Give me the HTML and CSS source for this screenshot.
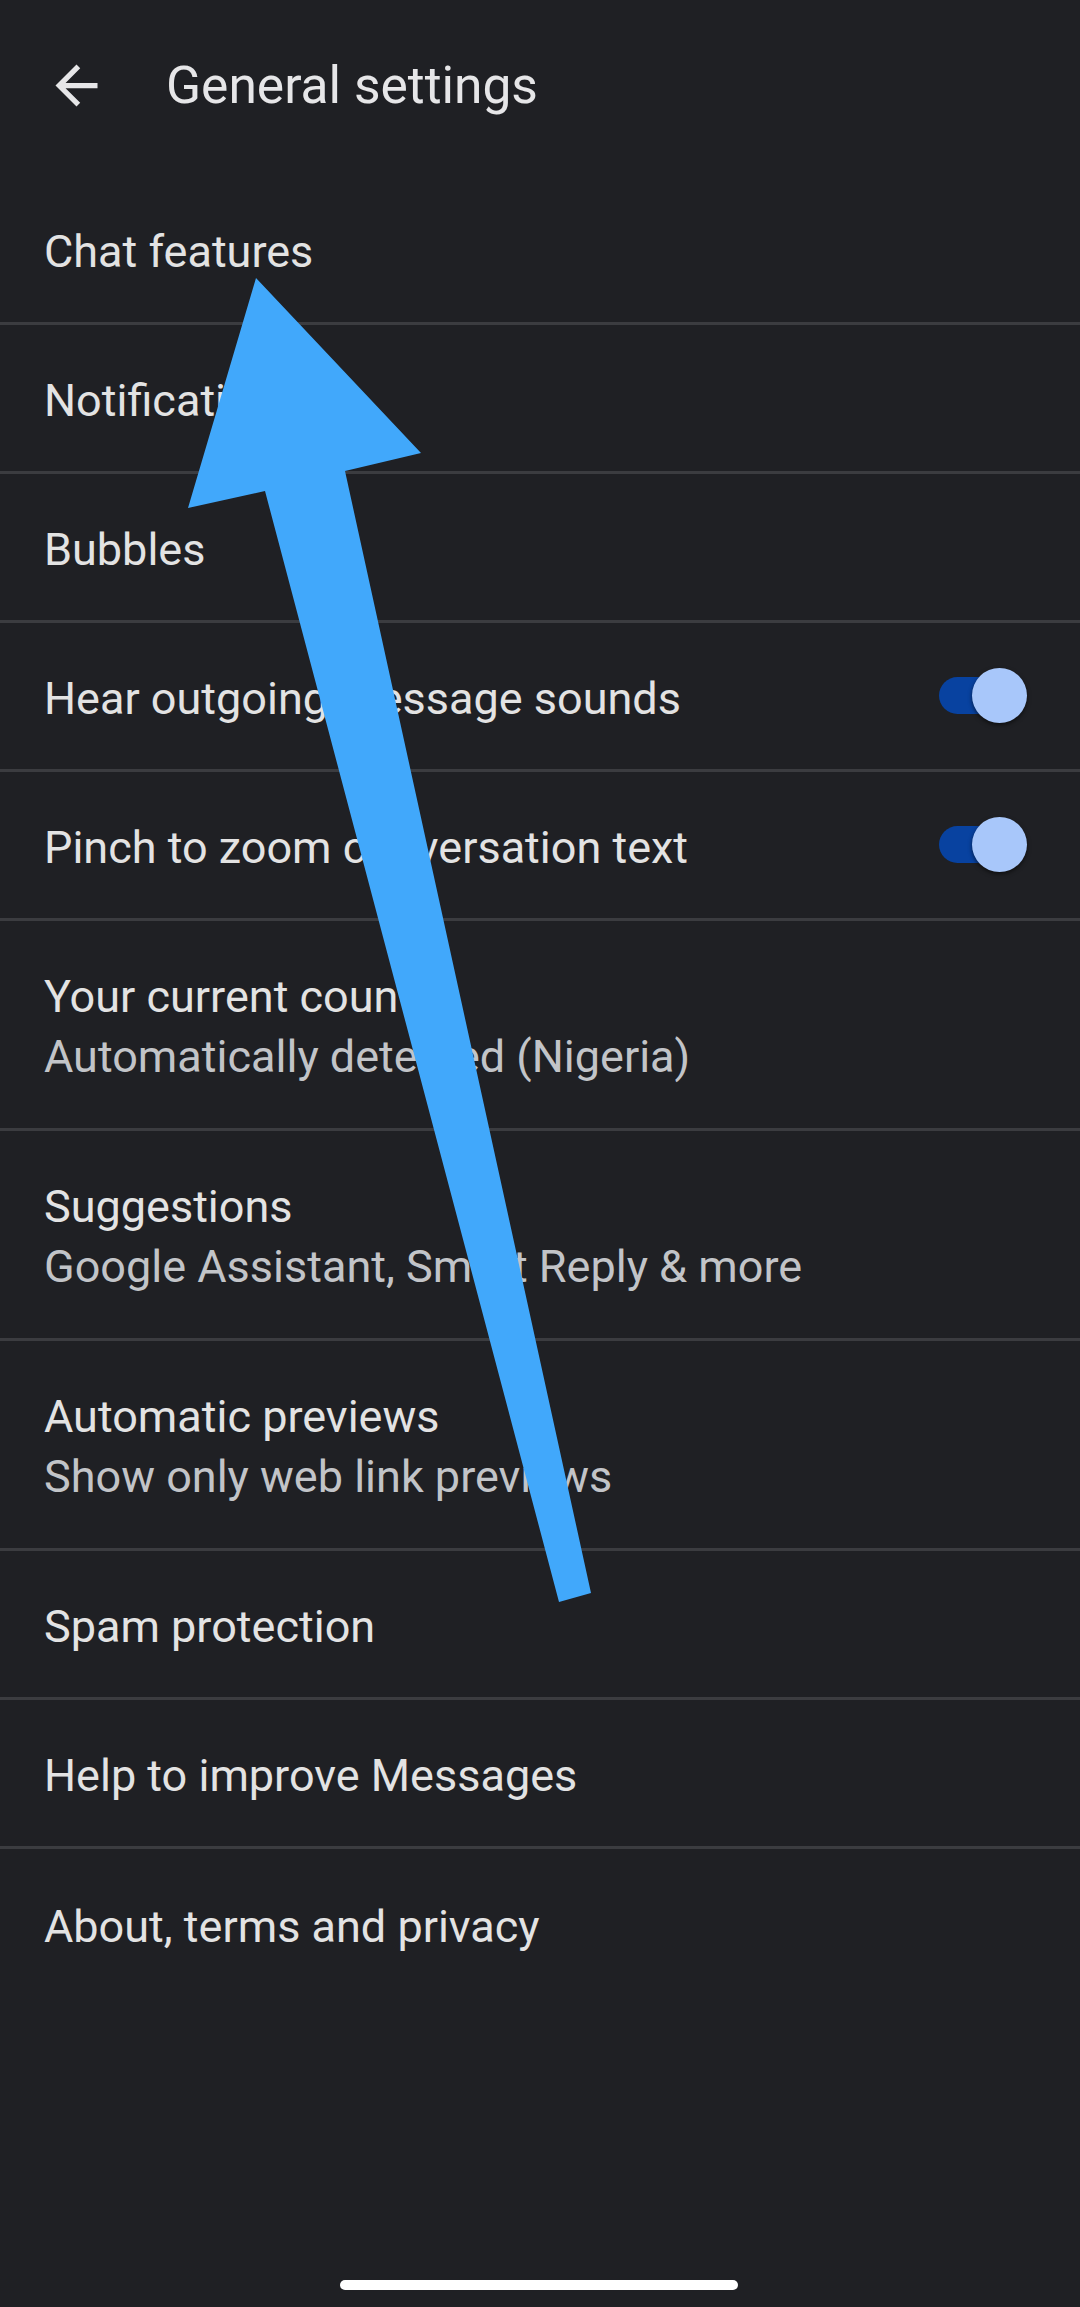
FILE: index.html
```html
<!DOCTYPE html>
<html lang="en">
<head>
<meta charset="utf-8">
<title>General settings</title>
<link rel="stylesheet" href="styles.css">
</head>
<body>
<div class="screen">
  <header class="topbar">
    <svg class="back" viewBox="0 0 24 24" aria-hidden="true">
      <path d="M20 11H7.83l5.59-5.59L12 4l-8 8 8 8 1.41-1.41L7.83 13H20v-2z"/>
    </svg>
    <h1 class="title">General settings</h1>
  </header>

  <ul class="list">
    <li class="row"><div class="texts"><span class="label">Chat features</span></div></li>
    <li class="row"><div class="texts"><span class="label">Notifications</span></div></li>
    <li class="row"><div class="texts"><span class="label">Bubbles</span></div></li>
    <li class="row">
      <div class="texts"><span class="label">Hear outgoing message sounds</span></div>
      <div class="switch"><span class="track"></span><span class="thumb"></span></div>
    </li>
    <li class="row">
      <div class="texts"><span class="label">Pinch to zoom conversation text</span></div>
      <div class="switch"><span class="track"></span><span class="thumb"></span></div>
    </li>
    <li class="row tall">
      <div class="texts">
        <span class="label">Your current country</span>
        <span class="sub">Automatically detected (Nigeria)</span>
      </div>
    </li>
    <li class="row tall">
      <div class="texts">
        <span class="label">Suggestions</span>
        <span class="sub">Google Assistant, Smart Reply &amp; more</span>
      </div>
    </li>
    <li class="row tall">
      <div class="texts">
        <span class="label">Automatic previews</span>
        <span class="sub">Show only web link previews</span>
      </div>
    </li>
    <li class="row"><div class="texts"><span class="label">Spam protection</span></div></li>
    <li class="row"><div class="texts"><span class="label">Help to improve Messages</span></div></li>
    <li class="row last"><div class="texts"><span class="label">About, terms and privacy</span></div></li>
  </ul>

  <svg class="annotation" viewBox="0 0 1080 2307" aria-hidden="true">
    <polygon points="256,278 421,453 345,471 591,1593 559,1602 265,491 188,508"/>
  </svg>

  <div class="homebar"></div>
</div>
</body>
</html>
```

FILE: styles.css
```css
* {
  box-sizing: border-box;
}

html, body {
  margin: 0;
  padding: 0;
  background: #1f2024;
}

body {
  font-family: Roboto, "Liberation Sans", Arial, sans-serif;
  color: #e3e3e3;
}

.screen {
  position: relative;
  width: 1080px;
  height: 2307px;
  overflow: hidden;
  background: #1f2024;
}

.topbar {
  display: flex;
  align-items: center;
  height: 171px;
  padding-left: 45px;
  padding-bottom: 1px;
}

.back {
  width: 63px;
  height: 63px;
  fill: #e6e6e8;
  flex: none;
}

.title {
  margin: 2px 0 0 58px;
  font-size: 51.5px;
  font-weight: 400;
  line-height: 60px;
  color: #e6e6e8;
  letter-spacing: 0;
}

.list {
  list-style: none;
  margin: 0;
  padding: 0;
  margin-top: 5px;
}

.row {
  display: flex;
  align-items: center;
  justify-content: space-between;
  height: 149px;
  padding: 6px 53px 0 44px;
  border-bottom: 3px solid #3b3c40;
}

.row.tall {
  height: 210px;
  padding-top: 4px;
}

.row.last {
  border-bottom: none;
}

.texts {
  display: flex;
  flex-direction: column;
}

.label {
  font-size: 45px;
  line-height: 60px;
  color: #e3e3e3;
}

.sub {
  font-size: 45px;
  line-height: 60px;
  color: #c2c4c8;
}

.switch {
  position: relative;
  width: 88px;
  height: 55px;
  flex: none;
  margin-top: -8px;
}

.track {
  position: absolute;
  left: 0;
  top: 9px;
  width: 80px;
  height: 37px;
  border-radius: 19px;
  background: #0842a0;
}

.thumb {
  position: absolute;
  right: 0;
  top: 0;
  width: 55px;
  height: 55px;
  border-radius: 50%;
  background: #a8c7fa;
  box-shadow: 0 2px 4px rgba(0, 0, 0, 0.55);
}

.annotation {
  position: absolute;
  left: 0;
  top: 0;
  width: 1080px;
  height: 2307px;
  fill: #41a8fb;
  pointer-events: none;
}

.homebar {
  position: absolute;
  left: 340px;
  top: 2280px;
  width: 398px;
  height: 10px;
  border-radius: 5px;
  background: #ffffff;
}
```
